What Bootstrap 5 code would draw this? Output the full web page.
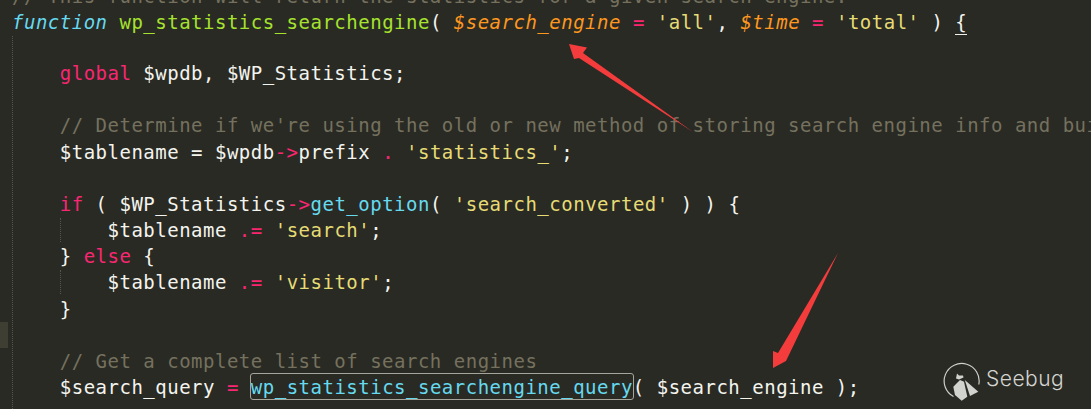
<!DOCTYPE html>
<html lang="en">
<head>
<meta charset="utf-8">
<title>wp_statistics_searchengine</title>
<link href="https://cdn.jsdelivr.net/npm/bootstrap@5.3.0/dist/css/bootstrap.min.css" rel="stylesheet">
<style>
html, body { margin: 0; height: 100%; background: #272822; overflow: hidden; }
.editor-pane { height: 409px; width: 1091px; overflow: hidden; background: #292a24; color: #f4f4ee; font-family: "DejaVu Sans Mono", monospace; font-size: 19px; letter-spacing: .5px; }
.code-stack { margin-top: -17px; padding-left: 12px; }
.code-row { height: 26.2px; line-height: 26.2px; white-space: pre; }
.code-row:nth-child(2) { margin-bottom: -1.6px; }
.ts-k { color: #f92672; }
.ts-s { color: #e6db74; }
.ts-c { color: #75715e; }
.ts-f { color: #a6e22e; }
.ts-t { color: #66d9ef; font-style: italic; }
.ts-v { color: #fd971f; font-style: italic; }
.ts-q { color: #66d9ef; }
.brace-mark { border-bottom: 1px solid #f0f0e8; padding-bottom: 1px; }
.match-box { outline: 1px solid #a5a59b; border-radius: 2px; padding: 2px 0 1px; }
.guide-line { position: absolute; width: 0; border-left: 1px dotted #55564e; }
.guide-a { left: 12px; top: 36px; height: 373px; }
.guide-b { left: 60px; top: 218px; height: 24px; }
.guide-c { left: 60px; top: 270px; height: 24px; }
.fold-mark { position: absolute; left: 0; top: 322px; width: 8px; height: 26px; background: #3e3e32; }
.arrow-layer { position: absolute; left: 0; top: 0; width: 1091px; height: 409px; pointer-events: none; }
.brand-mark { position: absolute; left: 943px; top: 361px; display: flex; align-items: center; gap: 6px; color: #d4d4d0; }
.brand-name { font-family: "Inter", "Liberation Sans", sans-serif; font-size: 21px; font-weight: 300; letter-spacing: .5px; margin-top: -5px; }
</style>
</head>
<body>
<main class="editor-pane position-relative">
  <div class="code-stack">
    <div class="code-row"><span class="ts-c">// This function will return the statistics for a given search engine.</span></div>
    <div class="code-row"><span class="ts-t">function</span> <span class="ts-f">wp_statistics_searchengine</span>( <span class="ts-v">$search_engine</span> <span class="ts-k">=</span> <span class="ts-s">'all'</span>, <span class="ts-v">$time</span> <span class="ts-k">=</span> <span class="ts-s">'total'</span> ) <span class="brace-mark">{</span></div>
    <div class="code-row"> </div>
    <div class="code-row">    <span class="ts-k">global</span> $wpdb, $WP_Statistics;</div>
    <div class="code-row"> </div>
    <div class="code-row">    <span class="ts-c">// Determine if we're using the old or new method of storing search engine info and build</span></div>
    <div class="code-row">    $tablename = $wpdb<span class="ts-k">-&gt;</span>prefix <span class="ts-k">.</span> <span class="ts-s">'statistics_'</span>;</div>
    <div class="code-row"> </div>
    <div class="code-row">    <span class="ts-k">if</span> ( $WP_Statistics<span class="ts-k">-&gt;</span><span class="ts-q">get_option</span>( <span class="ts-s">'search_converted'</span> ) ) {</div>
    <div class="code-row">        $tablename <span class="ts-k">.=</span> <span class="ts-s">'search'</span>;</div>
    <div class="code-row">    } <span class="ts-k">else</span> {</div>
    <div class="code-row">        $tablename <span class="ts-k">.=</span> <span class="ts-s">'visitor'</span>;</div>
    <div class="code-row">    }</div>
    <div class="code-row"> </div>
    <div class="code-row">    <span class="ts-c">// Get a complete list of search engines</span></div>
    <div class="code-row">    $search_query <span class="ts-k">=</span> <span class="ts-q match-box">wp_statistics_searchengine_query</span>( $search_engine );</div>
  </div>
  <i class="guide-line guide-a"></i>
  <i class="guide-line guide-b"></i>
  <i class="guide-line guide-c"></i>
  <i class="fold-mark"></i>
  <svg class="arrow-layer" viewBox="0 0 1091 409" aria-hidden="true">
    <path d="M569 44 L587 47.5 L583 53 L693 132 L579 58 L574 59 Z" fill="#f43c3c"/>
    <path d="M838 253 L786 361 L773 368 L773 351 L778 353 Z" fill="#f43c3c"/>
  </svg>
  <div class="brand-mark">
    <svg width="37" height="41" viewBox="0 0 37 41" aria-hidden="true">
      <path d="M10.5 35.5 A17.5 17.5 0 1 1 35.8 23.5" fill="none" stroke="#cfcfcb" stroke-width="1.2"/>
      <path d="M10.3 25.7 L17 19 L21 20.7 L24.3 35.7 L18.7 39.7 L12 34 Z" fill="#d2d2ce"/>
      <path d="M21.8 19 L35.3 30.7 L27 35 Z" fill="#d2d2ce"/>
      <path d="M13 17.5 L14 12.5 L16 14.5 L20 14.5 L20.5 16.5 L16 18.5 Z" fill="#d2d2ce"/>
    </svg>
    <span class="brand-name">Seebug</span>
  </div>
</main>
<script src="https://cdn.jsdelivr.net/npm/bootstrap@5.3.0/dist/js/bootstrap.bundle.min.js"></script>
</body>
</html>
